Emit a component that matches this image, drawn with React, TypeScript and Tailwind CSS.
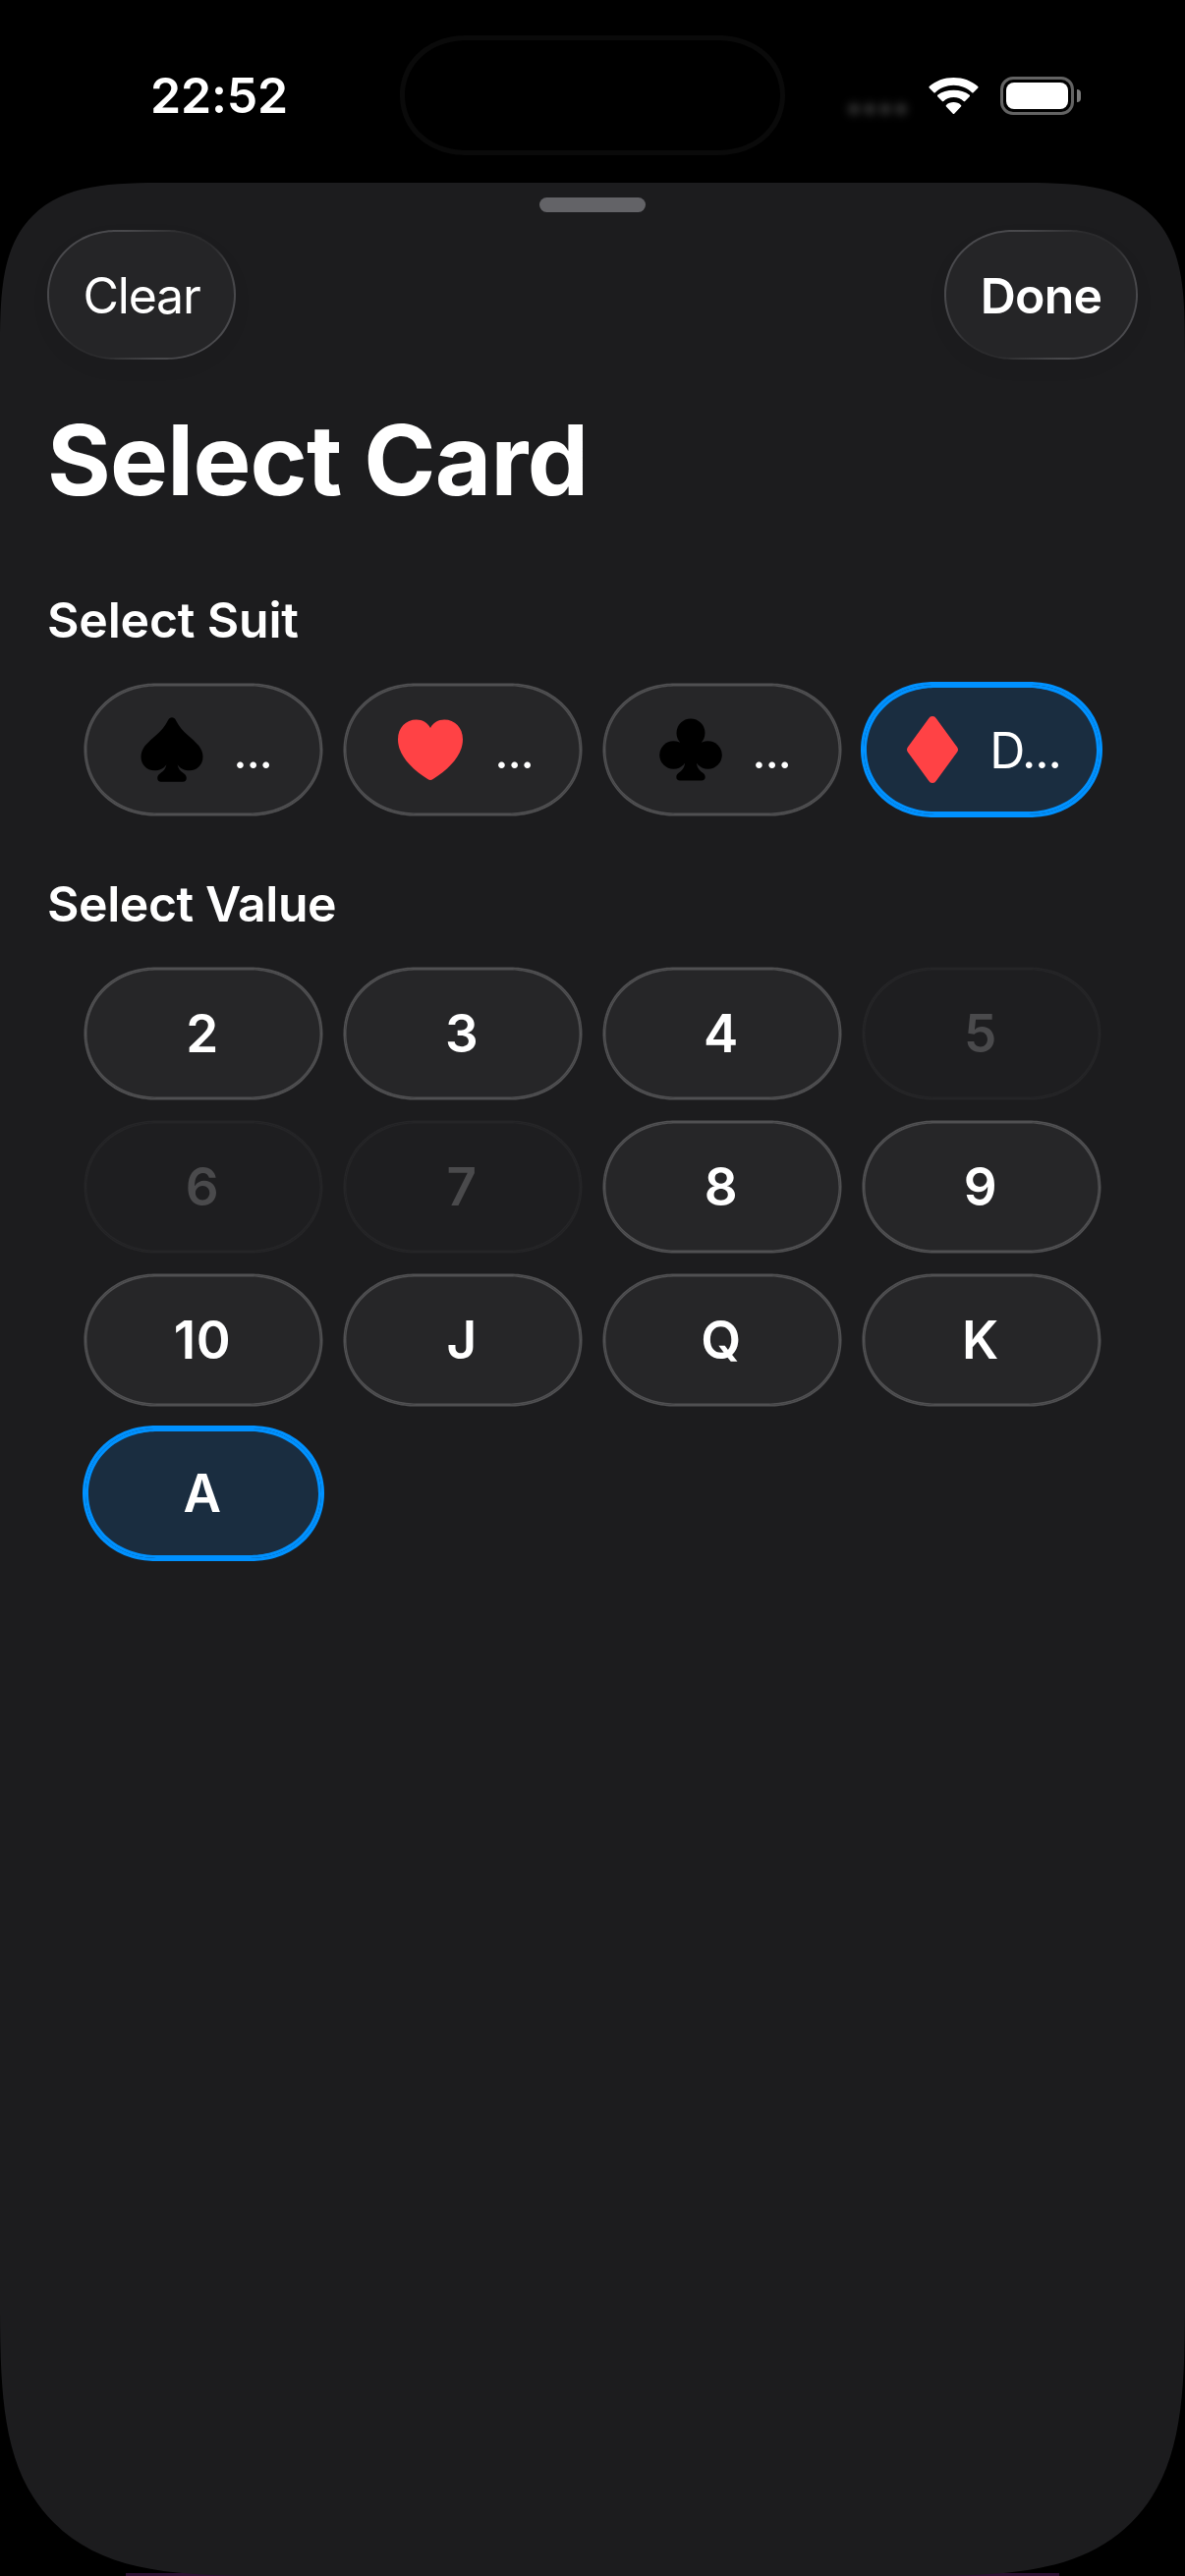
import React from "react";

type Suit = { name: string; color: string; label: string; gap: string; selected?: boolean };

const suits: Suit[] = [
  { name: "spade", color: "text-black", label: "...", gap: "ml-[30px]" },
  { name: "heart", color: "text-[#ff4245]", label: "...", gap: "ml-8" },
  { name: "club", color: "text-black", label: "...", gap: "ml-[30px]" },
  { name: "diamond", color: "text-[#ff4245]", label: "D...", gap: "mr-px ml-8", selected: true },
];

const values = ["2", "3", "4", "5", "6", "7", "8", "9", "10", "J", "Q", "K", "A"];
const disabled = ["5", "6", "7"];

function SuitIcon({ name }: { name: string }) {
  if (name === "spade")
    return (
      <svg viewBox="0 0 64 66" className="h-[66px] w-16 fill-current">
        <path d="M32 .3c1.700 0 3 .9 3.900 2.600C38.800 8.800 43 14 49.500 19.500 58 27 63.500 32 63.500 40.500 63.500 48.300 57.500 54.300 50 54.300c-5.300 0-9.700-2-12.300-6 .8 4.800 3 6.600 6.300 8.900 2 1.400 2.800 2.800 2.800 4.800 0 2.300-1.300 3.700-3.800 3.700H21c-2.500 0-3.800-1.400-3.800-3.700 0-2 .8-3.400 2.800-4.800 3.300-2.300 5.500-4.100 6.300-8.900-2.600 4-7 6-12.300 6C6.500 54.300.5 48.300.5 40.500.5 32 6 27 14.500 19.500 21 14 25.200 8.800 28.100 2.900 29 1.200 30.300.3 32 .3Z" />
      </svg>
    );
  if (name === "heart")
    return (
      <svg viewBox="0 0 66 62" className="h-[62px] w-[66px] fill-current">
        <path d="M33 62c-.8 0-1.800-.5-2.700-1.100C12 49.500 0 35.500 0 20.500 0 8.500 8.200.5 18.700.5 25.200.5 30.300 3.700 33 9 35.700 3.700 40.800.5 47.300.5 57.800.5 66 8.500 66 20.500c0 15-12 29-30.300 40.400-.9.600-1.900 1.100-2.700 1.100Z" />
      </svg>
    );
  if (name === "club")
    return (
      <svg viewBox="0 0 64 64" className="h-16 w-16 fill-current">
        <circle cx="32" cy="15" r="14.500" />
        <circle cx="14.500" cy="37.500" r="14.300" />
        <circle cx="49.500" cy="37.500" r="14.300" />
        <path d="M21 24h22v22h-5c.6 5 3 7.200 6.100 9.500 1.800 1.400 2.600 2.700 2.600 4.500 0 2.300-1.400 3.500-3.800 3.500H21.100c-2.400 0-3.800-1.200-3.800-3.500 0-1.800.8-3.100 2.600-4.500 3.100-2.300 5.500-4.500 6.100-9.500h-5Z" />
      </svg>
    );
  return (
    <svg viewBox="0 0 52 68" className="h-[68px] w-[52px] fill-current">
      <path d="M26 0c1.700 0 2.900.8 4 2.500l20.200 27.700c1.200 1.600 1.800 2.500 1.800 3.800s-.6 2.200-1.800 3.800L30 65.500c-1.100 1.700-2.300 2.500-4 2.500s-2.900-.8-4-2.500L1.800 37.800C.6 36.200 0 35.300 0 34s.6-2.200 1.800-3.800L22 2.500C23.100.8 24.300 0 26 0Z" />
    </svg>
  );
}

function chipTone(selected: boolean, off: boolean) {
  if (selected)
    return "bg-[#1a2d40] shadow-[0_0_0_3px_#0091ff,inset_0_0_0_3px_#0091ff]";
  if (off)
    return "bg-[#1e1e20] text-[#4a4a4c] shadow-[0_0_0_1.5px_#252527,inset_0_0_0_1.5px_#252527]";
  return "bg-[#262628] shadow-[0_0_0_1.5px_#505052,inset_0_0_0_1.5px_#505052]";
}

function Chip({ selected = false, off = false, children }: { selected?: boolean; off?: boolean; children: React.ReactNode }) {
  return (
    <button
      disabled={off}
      className={`flex h-[132px] items-center justify-center rounded-[72px/66px] [corner-shape:superellipse(1.04)] ${chipTone(selected, off)}`}
    >
      {children}
    </button>
  );
}

function GlassButton({ className, children }: { className: string; children: React.ReactNode }) {
  return (
    <button
      className={`h-[132px] rounded-[70px/66px] bg-[linear-gradient(135deg,#4c4c50_0%,#48484b_25%,#2b2b2d_44%,#2b2b2d_56%,#48484b_75%,#4c4c50_100%)] p-[2px] shadow-[0_8px_24px_rgba(0,0,0,0.03)] [corner-shape:superellipse(1.04)] ${className}`}
    >
      <span className="flex h-full w-full items-center justify-center rounded-[68px/64px] bg-[#252527] pt-0.5 [corner-shape:superellipse(1.04)]">{children}</span>
    </button>
  );
}

function StatusBar() {
  return (
    <header className="flex h-[186px] items-start justify-between">
      <div className="flex h-[194px] w-[407px] items-center pl-[153px]">
        <span className="text-[50px] leading-[60px] font-semibold tracking-[-0.2px]">22:52</span>
      </div>
      <div className="mt-9 h-[122px] w-[392px] rounded-[68px/61px] border-[5px] border-[#0a0a0a] [corner-shape:superellipse(1.06)]" />
      <div className="flex h-[194px] w-[407px] items-center pl-[64px]">
        <div className="mt-[28px] flex gap-1 blur-[4px]">
          <i className="size-3 rounded-full bg-[#303030]" />
          <i className="size-3 rounded-full bg-[#303030]" />
          <i className="size-3 rounded-full bg-[#303030]" />
          <i className="size-3 rounded-full bg-[#303030]" />
        </div>
        <svg viewBox="0 0 51 37" className="ml-[22px] h-[37px] w-[51px] fill-white">
          <path d="M25.500 7.700c7.200 0 13.800 2.800 18.700 7.500.4.400 1 .4 1.400 0l4.700-4.800c.4-.4.400-1 0-1.400C43.800 3.300 35.100 0 25.500 0S7.200 3.300.7 9c-.4.400-.4 1 0 1.400l4.700 4.800c.4.400 1 .4 1.400 0 4.900-4.700 11.500-7.500 18.700-7.500Z" />
          <path d="M25.500 20.100c3.900 0 7.500 1.500 10.200 3.900.4.400 1 .4 1.400 0l4.700-4.700c.4-.4.400-1.100 0-1.500-4.300-3.400-10-5-16.300-5S13.500 14.400 9.200 17.800c-.4.400-.4 1.100 0 1.500l4.700 4.700c.4.400 1 .4 1.400 0 2.700-2.400 6.300-3.900 10.200-3.900Z" />
          <path d="M33 29.400c.4-.4.400-1.100 0-1.500-2-1.800-4.600-2.800-7.500-2.800s-5.500 1-7.500 2.800c-.4.400-.4 1.100 0 1.500l6.800 7.300c.4.400 1 .4 1.400 0l6.800-7.300Z" />
        </svg>
        <div className="ml-[22px] h-[39px] w-[75px] rounded-[13px] border-[3px] border-[#636363] p-[3px]">
          <div className="h-full w-full rounded-[8px] bg-white" />
        </div>
        <div className="ml-[3px] h-[13px] w-1 rounded-r-full bg-[#7a7a7a]" />
      </div>
    </header>
  );
}

export default function App() {
  return (
    <div className="flex h-[2622px] w-[1206px] flex-col overflow-hidden bg-black bg-[linear-gradient(#2e1133,#2e1133)] bg-[length:950px_3px] bg-bottom bg-no-repeat font-[Inter,sans-serif] text-white">
      <StatusBar />
      <main className="flex h-[2436px] flex-col rounded-t-[174px] rounded-b-[284px] bg-[#1c1c1e] [corner-shape:superellipse(1.7)]">
        <div className="mx-auto mt-[15px] h-[15px] w-[108px] rounded-full bg-[#636367]" />
        <nav className="mt-[18px] flex justify-between px-12">
          <GlassButton className="w-[192px]">
            <span className="text-[50px] leading-[60px] tracking-[-1.2px]">Clear</span>
          </GlassButton>
          <GlassButton className="w-[197px]">
            <span className="text-[50px] leading-[60px] font-semibold tracking-[-0.8px]">Done</span>
          </GlassButton>
        </nav>
        <h1 className="mt-[42px] ml-12 text-[99px] leading-[120px] font-bold tracking-[-0.75px]">Select Card</h1>
        <h2 className="mt-[73px] ml-12 text-[50px] leading-[60px] font-semibold tracking-[-0.2px]">Select Suit</h2>
        <div className="mt-[36px] grid grid-cols-4 gap-6 px-[87px]">
          {suits.map((s) => (
            <Chip key={s.name} selected={s.selected}>
              <span className={`ml-1.5 ${s.color}`}>
                <SuitIcon name={s.name} />
              </span>
              <span className={`pt-px text-[50px] leading-[60px] tracking-[-1.2px] ${s.gap}`}>{s.label}</span>
            </Chip>
          ))}
        </div>
        <h2 className="mt-[61px] ml-12 text-[50px] leading-[60px] font-semibold tracking-[-0.45px]">Select Value</h2>
        <div className="mt-[36px] grid grid-cols-4 gap-6 px-[87px]">
          {values.map((v) => (
            <Chip key={v} selected={v === "A"} off={disabled.includes(v)}>
              <span className="pr-0.5 text-[53px] leading-[60px] font-semibold tracking-[0.5px]">{v}</span>
            </Chip>
          ))}
        </div>
      </main>
    </div>
  );
}
